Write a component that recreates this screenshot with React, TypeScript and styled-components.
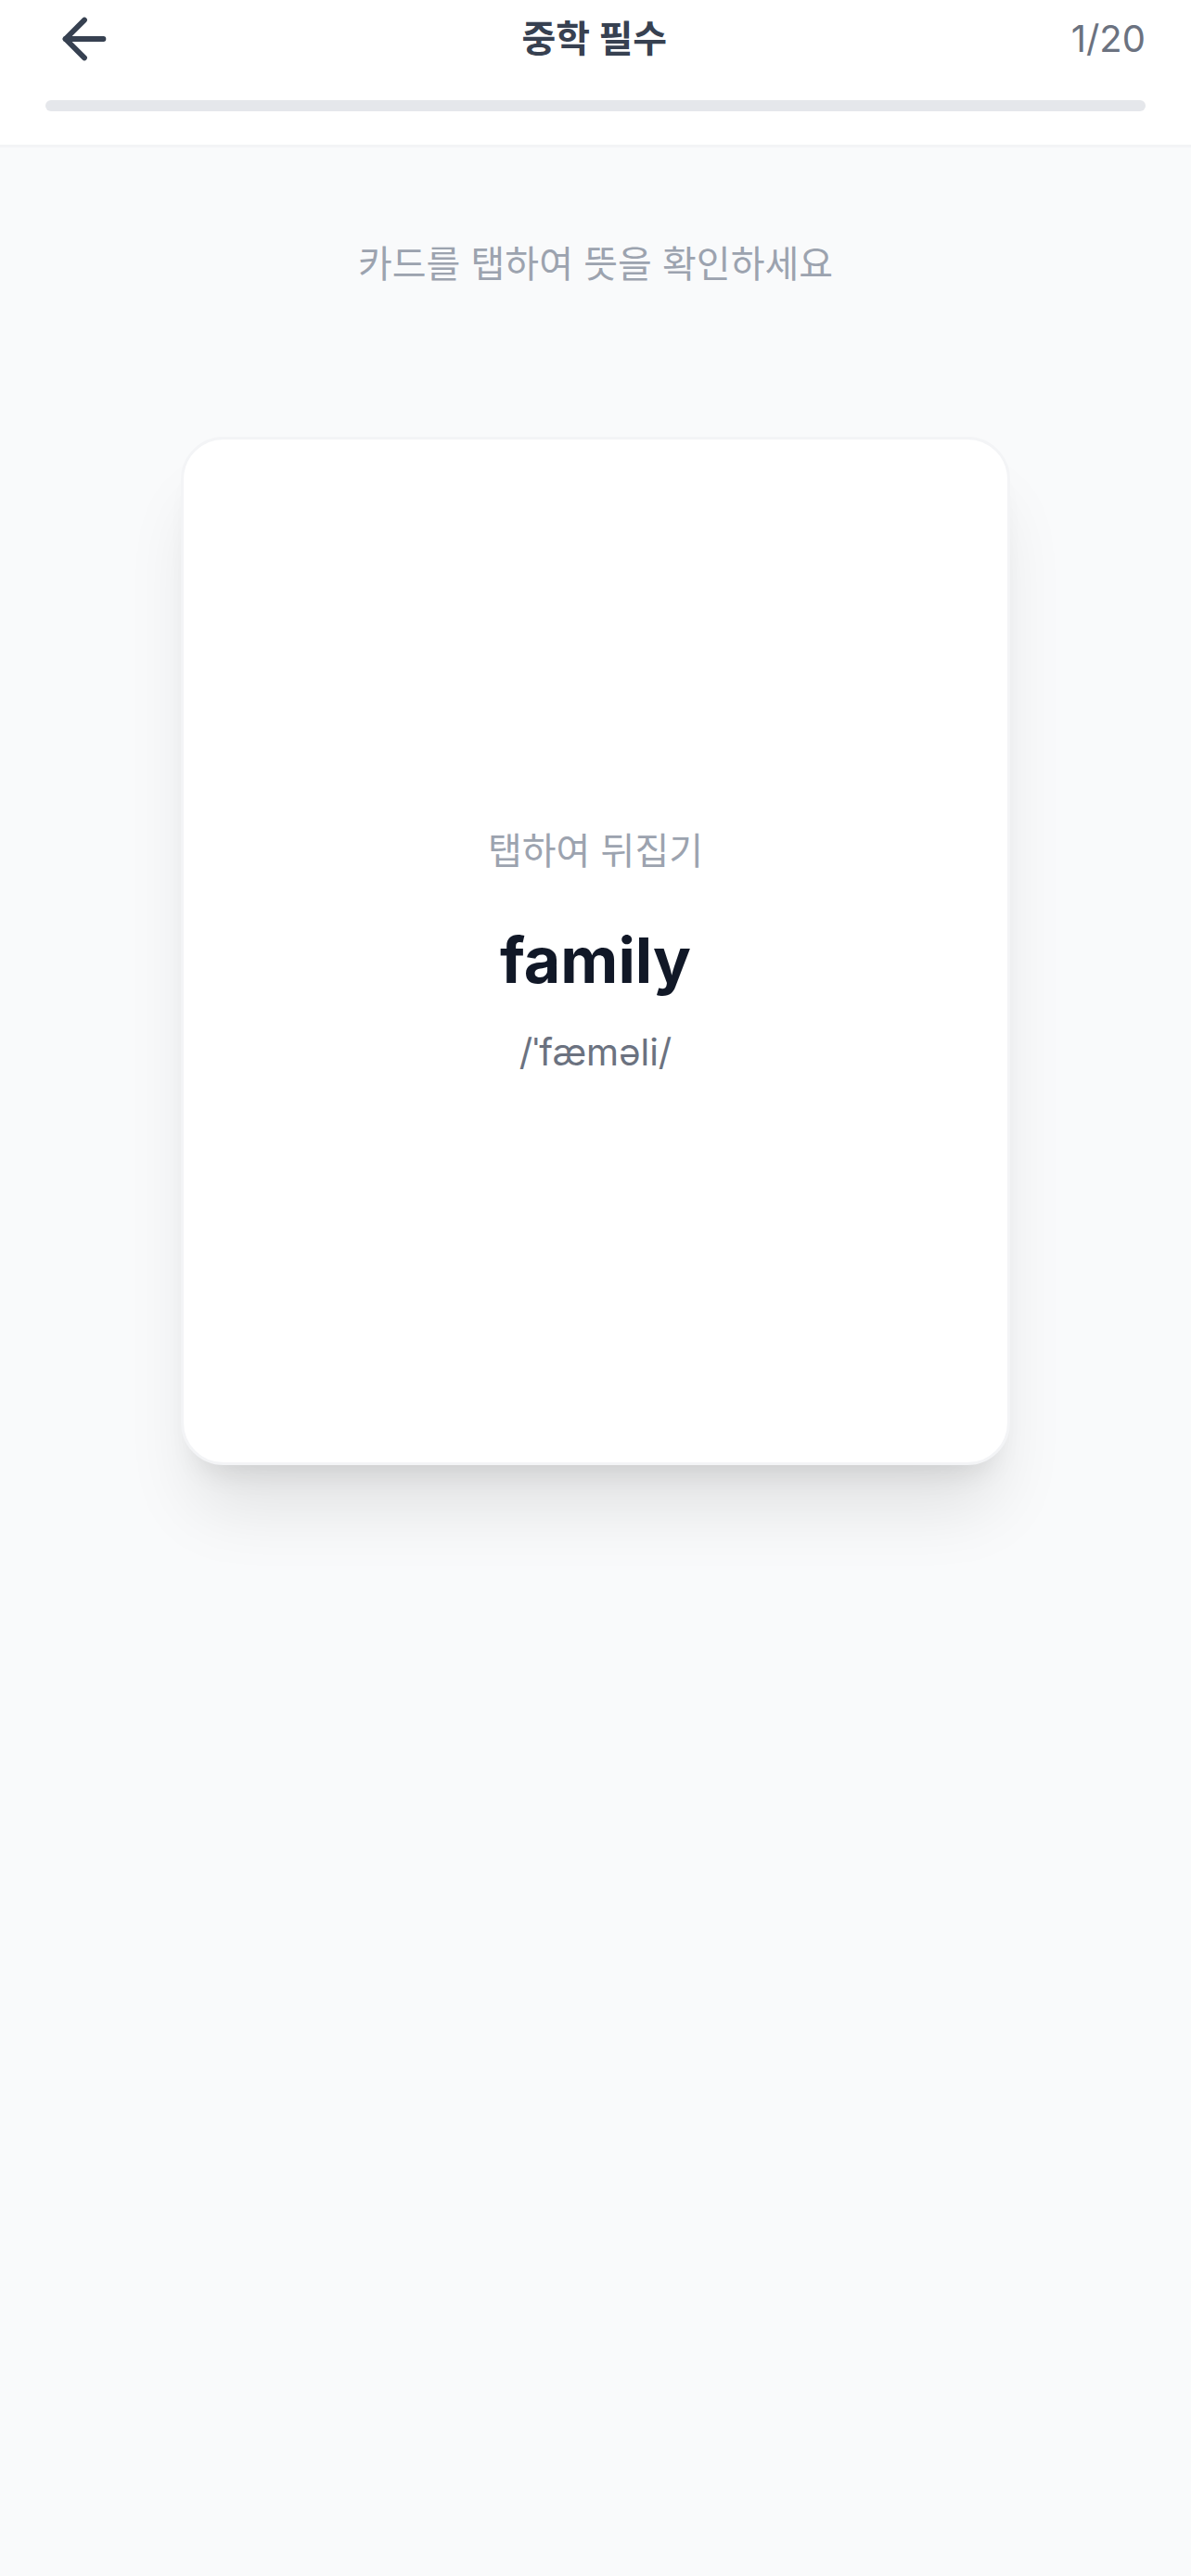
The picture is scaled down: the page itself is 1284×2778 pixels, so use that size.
import React from 'react';
import styled, { createGlobalStyle } from 'styled-components';
import { ArrowLeft } from 'lucide-react';

const GlobalStyle = createGlobalStyle`
  html, body {
    margin: 0;
    padding: 0;
    background: #f9fafb;
  }
  body {
    font-family: Inter, "Noto Sans CJK KR", "Noto Sans", sans-serif;
    -webkit-font-smoothing: antialiased;
  }
  * {
    box-sizing: border-box;
  }
`;

const Page = styled.div`
  min-height: 2778px;
  background: #f9fafb;
  display: flex;
  flex-direction: column;
`;

const Header = styled.header`
  background: #ffffff;
  border-bottom: 3px solid #f3f4f6;
  padding: 0 49px 36px 49px;
`;

const TopRow = styled.div`
  height: 84px;
  display: flex;
  align-items: center;
  justify-content: space-between;
`;

const BackButton = styled.button`
  width: 72px;
  height: 72px;
  margin-left: 6px;
  padding: 0;
  border: none;
  background: transparent;
  color: #374151;
  display: flex;
  align-items: center;
  justify-content: center;
  cursor: pointer;
`;

const Title = styled.h1`
  margin: 0;
  font-size: 40px;
  font-weight: 700;
  color: #374151;
  line-height: 1.2;
`;

const Counter = styled.span`
  font-size: 40px;
  color: #6b7280;
  line-height: 1.2;
  min-width: 79px;
  text-align: right;
`;

const ProgressTrack = styled.div`
  margin-top: 24px;
  height: 12px;
  border-radius: 999px;
  background: #e5e7eb;
  overflow: hidden;
`;

const ProgressFill = styled.div`
  height: 100%;
  background: #3b82f6;
  border-radius: 999px;
`;

const Main = styled.main`
  display: flex;
  flex-direction: column;
  align-items: center;
  padding: 96px 48px 0;
`;

const Hint = styled.p`
  margin: 0;
  font-size: 40px;
  color: #9ca3af;
  line-height: 1.5;
`;

const Card = styled.div`
  margin-top: 156px;
  width: 894px;
  height: 1109px;
  background: #ffffff;
  border: 3px solid #f3f4f6;
  border-radius: 46px;
  box-shadow: 0 60px 75px -15px rgba(0, 0, 0, 0.1), 0 24px 30px -18px rgba(0, 0, 0, 0.1);
  display: flex;
  flex-direction: column;
  align-items: center;
  justify-content: center;
  cursor: pointer;
`;

const FlipLabel = styled.span`
  font-size: 40px;
  color: #9ca3af;
  line-height: 1.5;
`;

const Word = styled.h2`
  margin: 47px 0 0;
  font-size: 68px;
  font-weight: 700;
  color: #111827;
  line-height: 1.2;
`;

const Phonetic = styled.span`
  margin-top: 30px;
  font-size: 40px;
  color: #6b7280;
  line-height: 1.4;
`;

const App: React.FC = () => {
  const current = 1;
  const total = 20;
  const progress = ((current - 1) / total) * 100;

  return (
    <Page>
      <GlobalStyle />
      <Header>
        <TopRow>
          <BackButton aria-label="뒤로">
            <ArrowLeft size={70} strokeWidth={2} />
          </BackButton>
          <Title>중학 필수</Title>
          <Counter>
            {current}/{total}
          </Counter>
        </TopRow>
        <ProgressTrack>
          <ProgressFill style={{ width: `${progress}%` }} />
        </ProgressTrack>
      </Header>

      <Main>
        <Hint>카드를 탭하여 뜻을 확인하세요</Hint>
        <Card>
          <FlipLabel>탭하여 뒤집기</FlipLabel>
          <Word>family</Word>
          <Phonetic>/ˈfæməli/</Phonetic>
        </Card>
      </Main>
    </Page>
  );
};

export default App;
